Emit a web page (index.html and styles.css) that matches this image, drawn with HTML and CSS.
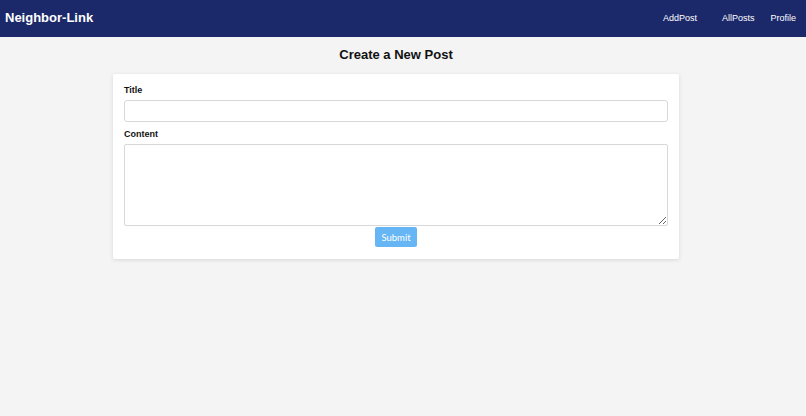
FILE: index.html
```html
<!DOCTYPE html>
<html lang="en">
<head>
<meta charset="utf-8">
<title>Neighbor-Link</title>
<link rel="stylesheet" href="styles.css">
</head>
<body>
<header class="nav">
  <div class="logo">Neighbor-Link</div>
  <nav class="links">
    <a class="link link-add" href="#">AddPost</a>
    <a class="link link-all" href="#">AllPosts</a>
    <a class="link" href="#">Profile</a>
  </nav>
</header>
<main class="main">
  <h1 class="heading">Create a New Post</h1>
  <form class="card">
    <label class="label" for="title">Title</label>
    <input class="input" id="title" type="text">
    <label class="label" for="content">Content</label>
    <textarea class="textarea" id="content"></textarea>
    <div class="actions">
      <button class="submit" type="button">Submit</button>
    </div>
  </form>
</main>
</body>
</html>
```
FILE: styles.css
```css
* { box-sizing: border-box; }
html, body { margin: 0; padding: 0; }
body {
  background: #f4f4f4;
  font-family: "Liberation Sans", Arial, sans-serif;
  color: #111;
  width: 806px;
  height: 416px;
  overflow: hidden;
}
.nav {
  height: 37px;
  background: #1b296b;
  display: flex;
  align-items: center;
  justify-content: space-between;
  padding: 0 10px 0 5px;
}
.logo {
  color: #fff;
  font-weight: bold;
  font-size: 13px;
  padding-bottom: 2px;
}
.links {
  display: flex;
  align-items: center;
  padding-bottom: 1px;
}
.link {
  color: #fff;
  text-decoration: none;
  font-size: 9px;
}
.link-add { margin-right: 25px; }
.link-all { margin-right: 16px; }
.main {
  width: 792px;
  padding-top: 10px;
}
.heading {
  margin: 0 0 11px;
  text-align: center;
  font-size: 13px;
  line-height: 16px;
  font-weight: bold;
  color: #111;
}
.card {
  width: 566px;
  margin: 0 auto;
  background: #fff;
  border-radius: 2px;
  box-shadow: 0 1px 4px rgba(0,0,0,0.12);
  padding: 11px 11px 12px;
  display: flex;
  flex-direction: column;
}
.label {
  font-size: 9px;
  line-height: 10px;
  font-weight: bold;
  color: #111;
  margin-bottom: 5px;
}
.input {
  height: 22px;
  border: 1px solid #d8d8d8;
  border-radius: 3px;
  margin: 0 0 7px;
  padding: 0 4px;
  font: inherit;
}
.textarea {
  height: 82px;
  border: 1px solid #d8d8d8;
  border-radius: 2px;
  margin: 0;
  padding: 4px;
  font: inherit;
  resize: vertical;
}
.actions {
  display: flex;
  justify-content: center;
  margin-top: 1px;
}
.submit {
  width: 42px;
  height: 20px;
  border: none;
  border-radius: 2px;
  background: #66b6f6;
  color: #fff;
  font-family: Lato, "Open Sans", sans-serif;
  font-size: 9.5px;
  padding: 0;
}
```
